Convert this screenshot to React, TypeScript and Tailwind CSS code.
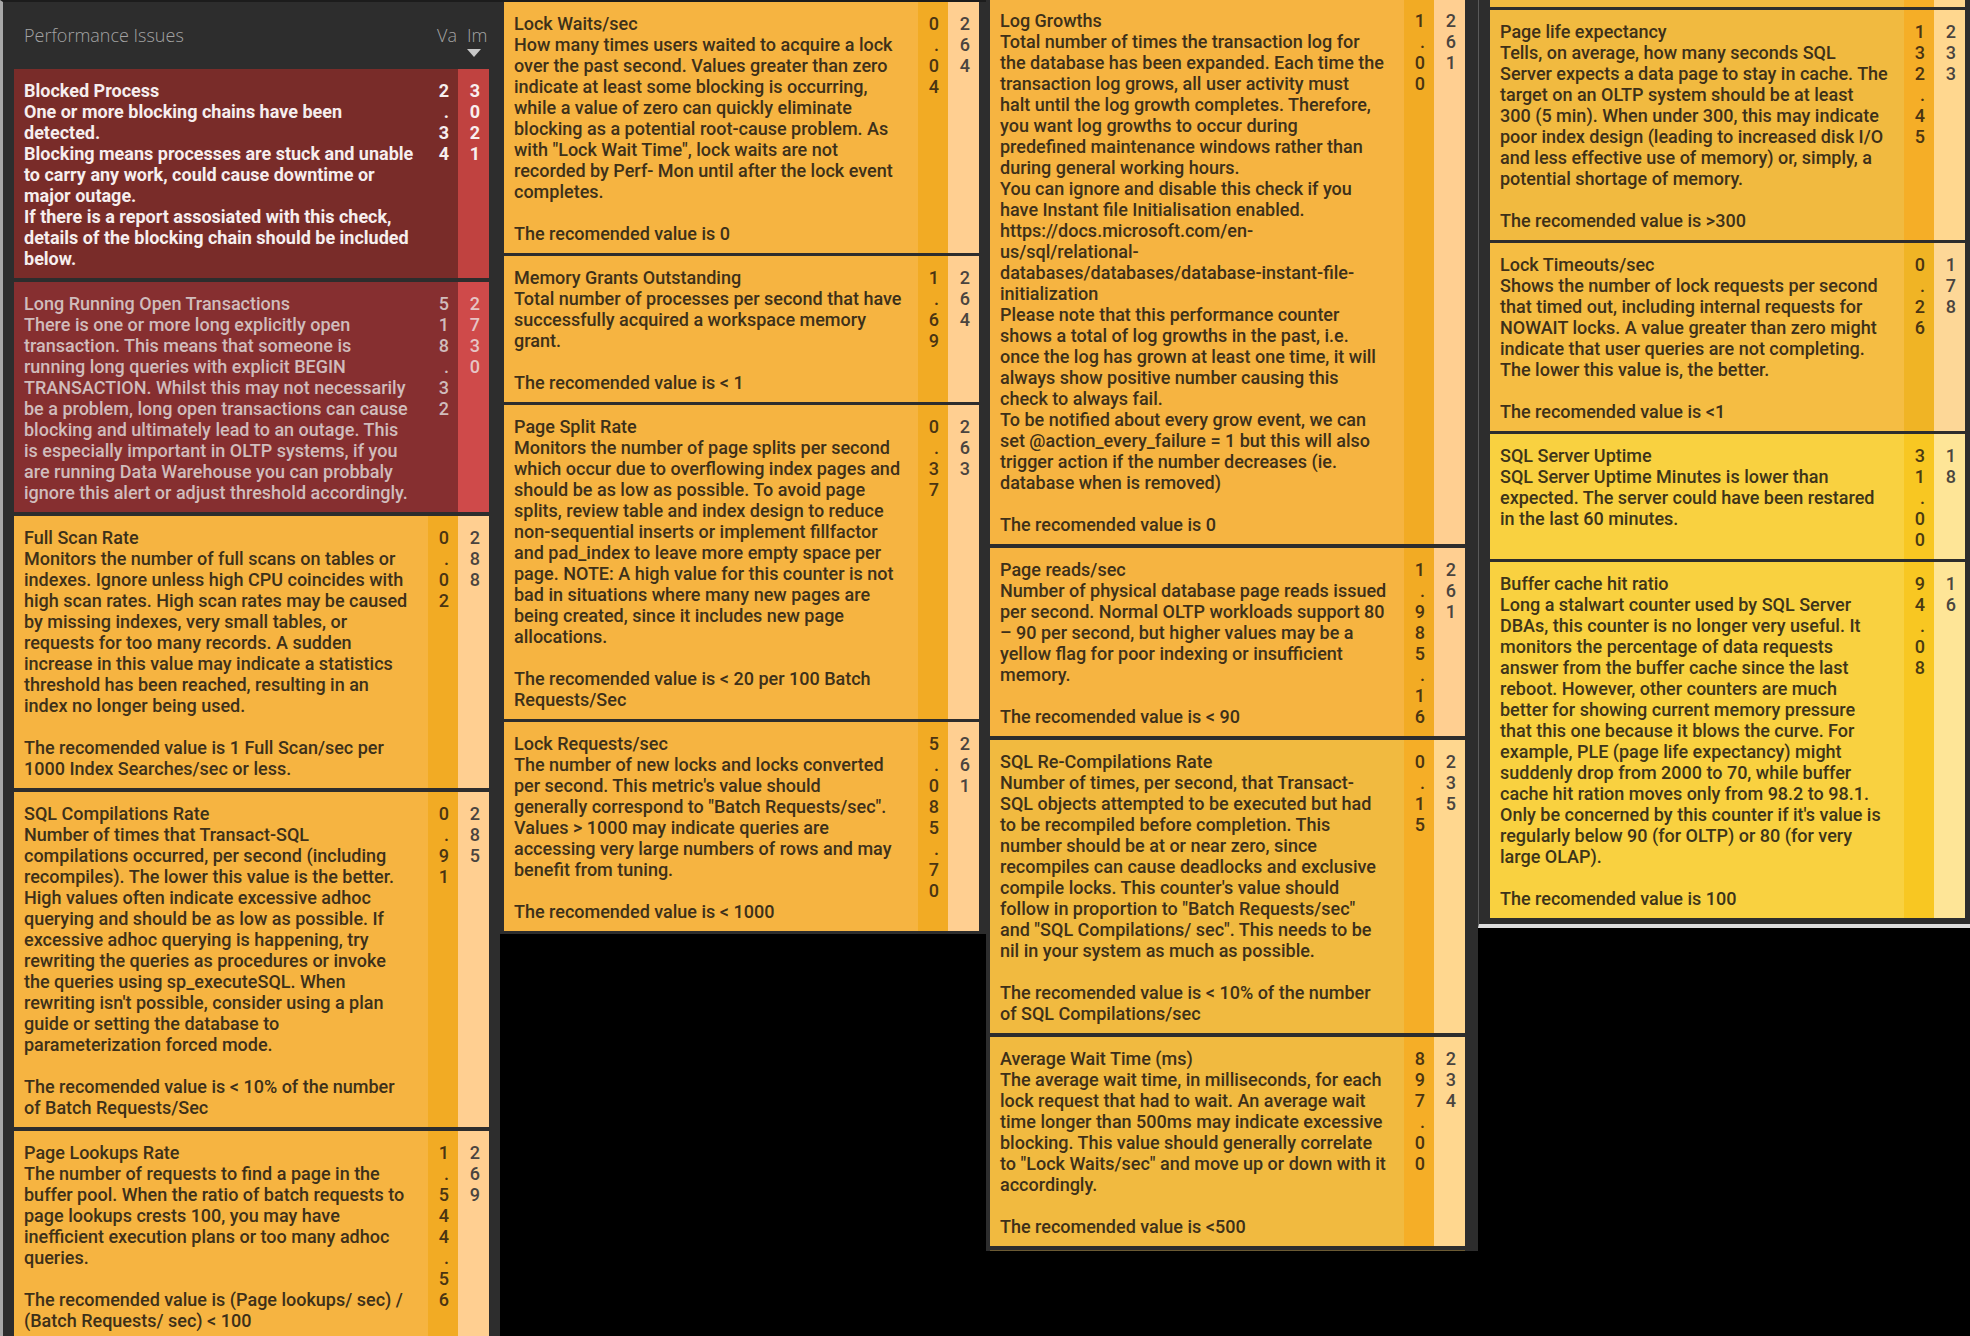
import React from "react";

type Tone = "critical" | "severe" | "orange" | "amber" | "apricot" | "yellow";

type Issue = {
  title: string;
  body: string;
  link?: string;
  after?: string;
  value: string;
  impact: string;
  tone: Tone;
};

const TONES: Record<Tone, { text: string; value: string; impact: string }> = {
  critical: {
    text: "bg-[#792c29] text-[#f6eeee] font-bold",
    value: "bg-[#792c29] text-[#f6eeee] font-bold",
    impact: "bg-[#c04240] text-[#f9eeee] font-bold",
  },
  severe: {
    text: "bg-[#862f30] text-[#d0bcbc] font-medium",
    value: "bg-[#862f30] text-[#d0bcbc] font-medium",
    impact: "bg-[#cf4a4a] text-[#e6c4c4] font-medium",
  },
  orange: {
    text: "bg-[#f6b441] text-[#3d3019] font-medium",
    value: "bg-[#f2ab24] text-[#4a3412] font-medium",
    impact: "bg-[#ffcf91] text-[#4a443f] font-medium",
  },
  amber: {
    text: "bg-[#f1ba40] text-[#3d3019] font-medium",
    value: "bg-[#f5ae27] text-[#4a3412] font-medium",
    impact: "bg-[#ffd78f] text-[#4a443f] font-medium",
  },
  apricot: {
    text: "bg-[#f5bd43] text-[#3d3019] font-medium",
    value: "bg-[#f0b425] text-[#4a3412] font-medium",
    impact: "bg-[#fdd797] text-[#4a443f] font-medium",
  },
  yellow: {
    text: "bg-[#f9d140] text-[#3d3419] font-medium",
    value: "bg-[#f8c722] text-[#4a3a12] font-medium",
    impact: "bg-[#fee597] text-[#4a463f] font-medium",
  },
};

const FIRST: Issue[] = [
  {
    title: "Blocked Process",
    body: `One or more blocking chains have been
detected.
Blocking means processes are stuck and unable
to carry any work, could cause downtime or
major outage.
If there is a report assosiated with this check,
details of the blocking chain should be included
below.`,
    value: "2.34",
    impact: "3021",
    tone: "critical",
  },
  {
    title: "Long Running Open Transactions",
    body: `There is one or more long explicitly open
transaction. This means that someone is
running long queries with explicit BEGIN
TRANSACTION. Whilst this may not necessarily
be a problem, long open transactions can cause
blocking and ultimately lead to an outage. This
is especially important in OLTP systems, if you
are running Data Warehouse you can probbaly
ignore this alert or adjust threshold accordingly.`,
    value: "518.32",
    impact: "2730",
    tone: "severe",
  },
  {
    title: "Full Scan Rate",
    body: `Monitors the number of full scans on tables or
indexes. Ignore unless high CPU coincides with
high scan rates. High scan rates may be caused
by missing indexes, very small tables, or
requests for too many records. A sudden
increase in this value may indicate a statistics
threshold has been reached, resulting in an
index no longer being used.

The recomended value is 1 Full Scan/sec per
1000 Index Searches/sec or less.`,
    value: "0.02",
    impact: "288",
    tone: "orange",
  },
  {
    title: "SQL Compilations Rate",
    body: `Number of times that Transact-SQL
compilations occurred, per second (including
recompiles). The lower this value is the better.
High values often indicate excessive adhoc
querying and should be as low as possible. If
excessive adhoc querying is happening, try
rewriting the queries as procedures or invoke
the queries using sp_executeSQL. When
rewriting isn't possible, consider using a plan
guide or setting the database to
parameterization forced mode.

The recomended value is < 10% of the number
of Batch Requests/Sec`,
    value: "0.91",
    impact: "285",
    tone: "orange",
  },
  {
    title: "Page Lookups Rate",
    body: `The number of requests to find a page in the
buffer pool. When the ratio of batch requests to
page lookups crests 100, you may have
inefficient execution plans or too many adhoc
queries.

The recomended value is (Page lookups/ sec) /
(Batch Requests/ sec) < 100`,
    value: "1.544.56",
    impact: "269",
    tone: "orange",
  },
];

const SECOND: Issue[] = [
  {
    title: "Lock Waits/sec",
    body: `How many times users waited to acquire a lock
over the past second. Values greater than zero
indicate at least some blocking is occurring,
while a value of zero can quickly eliminate
blocking as a potential root-cause problem. As
with "Lock Wait Time", lock waits are not
recorded by Perf- Mon until after the lock event
completes.

The recomended value is 0`,
    value: "0.04",
    impact: "264",
    tone: "orange",
  },
  {
    title: "Memory Grants Outstanding",
    body: `Total number of processes per second that have
successfully acquired a workspace memory
grant.

The recomended value is < 1`,
    value: "1.69",
    impact: "264",
    tone: "orange",
  },
  {
    title: "Page Split Rate",
    body: `Monitors the number of page splits per second
which occur due to overflowing index pages and
should be as low as possible. To avoid page
splits, review table and index design to reduce
non-sequential inserts or implement fillfactor
and pad_index to leave more empty space per
page. NOTE: A high value for this counter is not
bad in situations where many new pages are
being created, since it includes new page
allocations.

The recomended value is < 20 per 100 Batch
Requests/Sec`,
    value: "0.37",
    impact: "263",
    tone: "orange",
  },
  {
    title: "Lock Requests/sec",
    body: `The number of new locks and locks converted
per second. This metric's value should
generally correspond to "Batch Requests/sec".
Values > 1000 may indicate queries are
accessing very large numbers of rows and may
benefit from tuning.

The recomended value is < 1000`,
    value: "5.085.70",
    impact: "261",
    tone: "orange",
  },
];

const THIRD: Issue[] = [
  {
    title: "Log Growths",
    body: `Total number of times the transaction log for
the database has been expanded. Each time the
transaction log grows, all user activity must
halt until the log growth completes. Therefore,
you want log growths to occur during
predefined maintenance windows rather than
during general working hours.
You can ignore and disable this check if you
have Instant file Initialisation enabled.
`,
    link: `https://docs.microsoft.com/en-
us/sql/relational-
databases/databases/database-instant-file-
initialization`,
    after: `
Please note that this performance counter
shows a total of log growths in the past, i.e.
once the log has grown at least one time, it will
always show positive number causing this
check to always fail.
To be notified about every grow event, we can
set @action_every_failure = 1 but this will also
trigger action if the number decreases (ie.
database when is removed)

The recomended value is 0`,
    value: "1.00",
    impact: "261",
    tone: "orange",
  },
  {
    title: "Page reads/sec",
    body: `Number of physical database page reads issued
per second. Normal OLTP workloads support 80
– 90 per second, but higher values may be a
yellow flag for poor indexing or insufficient
memory.

The recomended value is < 90`,
    value: "1.985.16",
    impact: "261",
    tone: "orange",
  },
  {
    title: "SQL Re-Compilations Rate",
    body: `Number of times, per second, that Transact-
SQL objects attempted to be executed but had
to be recompiled before completion. This
number should be at or near zero, since
recompiles can cause deadlocks and exclusive
compile locks. This counter's value should
follow in proportion to "Batch Requests/sec"
and "SQL Compilations/ sec". This needs to be
nil in your system as much as possible.

The recomended value is < 10% of the number
of SQL Compilations/sec`,
    value: "0.15",
    impact: "235",
    tone: "amber",
  },
  {
    title: "Average Wait Time (ms)",
    body: `The average wait time, in milliseconds, for each
lock request that had to wait. An average wait
time longer than 500ms may indicate excessive
blocking. This value should generally correlate
to "Lock Waits/sec" and move up or down with it
accordingly.

The recomended value is <500`,
    value: "897.00",
    impact: "234",
    tone: "amber",
  },
];

const FOURTH: Issue[] = [
  {
    title: "Page life expectancy",
    body: `Tells, on average, how many seconds SQL
Server expects a data page to stay in cache. The
target on an OLTP system should be at least
300 (5 min). When under 300, this may indicate
poor index design (leading to increased disk I/O
and less effective use of memory) or, simply, a
potential shortage of memory.

The recomended value is >300`,
    value: "132.45",
    impact: "233",
    tone: "amber",
  },
  {
    title: "Lock Timeouts/sec",
    body: `Shows the number of lock requests per second
that timed out, including internal requests for
NOWAIT locks. A value greater than zero might
indicate that user queries are not completing.
The lower this value is, the better.

The recomended value is <1`,
    value: "0.26",
    impact: "178",
    tone: "apricot",
  },
  {
    title: "SQL Server Uptime",
    body: `SQL Server Uptime Minutes is lower than
expected. The server could have been restared
in the last 60 minutes.`,
    value: "31.00",
    impact: "18",
    tone: "yellow",
  },
  {
    title: "Buffer cache hit ratio",
    body: `Long a stalwart counter used by SQL Server
DBAs, this counter is no longer very useful. It
monitors the percentage of data requests
answer from the buffer cache since the last
reboot. However, other counters are much
better for showing current memory pressure
that this one because it blows the curve. For
example, PLE (page life expectancy) might
suddenly drop from 2000 to 70, while buffer
cache hit ration moves only from 98.2 to 98.1.
Only be concerned by this counter if it's value is
regularly below 90 (for OLTP) or 80 (for very
large OLAP).

The recomended value is 100`,
    value: "94.08",
    impact: "16",
    tone: "yellow",
  },
];

function Digits({ text }: { text: string }) {
  return (
    <div className="ml-auto w-[11px] text-right [overflow-wrap:anywhere]">{text}</div>
  );
}

function IssueRow({ issue, rule }: { issue: Issue; rule: string }) {
  const tone = TONES[issue.tone];
  const cell = `border-[#2d2d2d] pt-[11px] pb-[9px] align-top ${rule}`;
  return (
    <tr>
      <td className={`${cell} pl-[10px] whitespace-pre ${tone.text}`}>
        <p>{issue.title}</p>
        <p>
          {issue.body}
          {issue.link && (
            <a href="https://docs.microsoft.com/en-us/sql/relational-databases/databases/database-instant-file-initialization">
              {issue.link}
            </a>
          )}
          {issue.after}
        </p>
      </td>
      <td className={`${cell} pr-[9px] ${tone.value}`}>
        <Digits text={issue.value} />
      </td>
      <td className={`${cell} pr-[9px] ${tone.impact}`}>
        <Digits text={issue.impact} />
      </td>
    </tr>
  );
}

function IssueTable({
  issues,
  rule,
  head,
}: {
  issues: Issue[];
  rule: string;
  head?: React.ReactNode;
}) {
  return (
    <table className="w-full table-fixed border-separate border-spacing-0">
      <colgroup>
        <col />
        <col className="w-[30px]" />
        <col className="w-[31px]" />
      </colgroup>
      {head}
      <tbody>
        {issues.map((issue) => (
          <IssueRow key={issue.title} issue={issue} rule={rule} />
        ))}
      </tbody>
    </table>
  );
}

function ListHead() {
  return (
    <thead className="font-['Open_Sans','Noto_Sans',sans-serif] text-[18px] text-[#a3a3a3]">
      <tr>
        <th className="h-[67px] pl-[10px] text-left font-light">Performance Issues</th>
        <th className="h-[67px] pl-[9px] text-left font-light">Va</th>
        <th className="h-[67px] pl-[9px] text-left font-light">
          <button type="button" aria-label="Im, sort by impact" className="relative block">
            Im
            <svg viewBox="0 0 14 8" className="absolute top-[24px] left-0 h-[8px] w-[14px]" aria-hidden="true">
              <path d="M0 0h14L7 8z" fill="#c8c8c8" />
            </svg>
          </button>
        </th>
      </tr>
    </thead>
  );
}

export default function App() {
  return (
    <main className="grid h-screen grid-cols-[500fr_486fr_492fr_492fr] items-start overflow-hidden bg-black font-['Roboto','Liberation_Sans',sans-serif] text-[18px] leading-[21px]">
      <section className="h-screen overflow-hidden border-t-2 border-l-3 border-t-[#1c1c1c] border-l-[#a8a8a8] bg-[#2d2d2d] pr-[11px] pl-[11px]">
        <IssueTable issues={FIRST} rule="border-b-4" head={<ListHead />} />
      </section>

      <section className="border-t-2 border-[#1c1c1c] bg-[#2d2d2d] pr-[7px] pl-[4px]">
        <IssueTable issues={SECOND} rule="border-b-3" />
      </section>

      <section className="bg-[#2d2d2d] pr-[13px] pl-[4px]">
        <div className="-mt-px">
          <IssueTable issues={THIRD} rule="border-b-4" />
        </div>
        <div className="h-px bg-[#6b5a33]" />
      </section>

      <section className="border-b-4 border-l border-b-[#dedede] border-l-[#5a5a5a] bg-[#2d2d2d] pr-[5px] pb-[3px] pl-[11px]">
        <div className="mb-[3px] grid h-[7px] grid-cols-[1fr_30px_31px]">
          <div className="bg-[#f1ba40]" />
          <div className="bg-[#f5ae27]" />
          <div className="bg-[#ffd78f]" />
        </div>
        <IssueTable issues={FOURTH} rule="border-b-3" />
      </section>
    </main>
  );
}
